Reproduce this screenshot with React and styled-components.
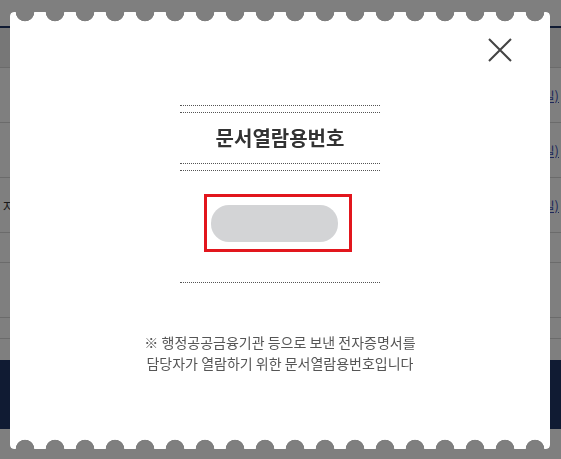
import styled, { createGlobalStyle } from "styled-components";

// -------------- GLOBAL --------------- //
const GlobalStyle = createGlobalStyle`
  html, body {
    margin: 0;
    padding: 0;
    background: #fff;
    font-family: "Noto Sans CJK KR", "Noto Sans", sans-serif;
  }
`;

// -------------- PAGE BEHIND --------------- //
const Page = styled.div`
  width: 561px;
  height: 459px;
  overflow: hidden;
  padding-top: 26px;
  box-sizing: border-box;
`;

const Table = styled.div`
  border-top: 2px solid #203666;
  display: flex;
  flex-direction: column;
`;

const Row = styled.div`
  height: ${(p) => p.$h}px;
  background: ${(p) => (p.$head ? "#eeeeee" : "#fff")};
  border-bottom: 1px solid #d6d6d6;
  box-sizing: border-box;
  display: flex;
  align-items: center;
  justify-content: space-between;
  font-size: 13px;
`;

const LeftCell = styled.span`
  padding-left: 3px;
  color: #333;
`;

const LinkCell = styled.span`
  padding-right: 2px;
  color: #3b4fb5;
  text-decoration: underline;
`;

const Footer = styled.div`
  margin-top: 21px;
  height: 69px;
  background: #203666;
`;

// -------------- MODAL --------------- //
const Overlay = styled.div`
  position: fixed;
  inset: 0;
  background: rgba(0, 0, 0, 0.5);
  padding: 12px 0 0 10px;
`;

//? scalloped top + bottom edge, circles every 30px
const scallop = `
  radial-gradient(circle at 15px 0, transparent 9px, #000 9.6px) top left / 30px 50% repeat-x,
  radial-gradient(circle at 15px 100%, transparent 9px, #000 9.6px) bottom left / 30px 50% repeat-x
`;

const Modal = styled.div`
  position: relative;
  width: 540px;
  height: 437px;
  background: #fff;
  border-radius: 4px;
  -webkit-mask: ${scallop};
  mask: ${scallop};
  display: flex;
  flex-direction: column;
  align-items: center;
  padding-top: 93px;
  box-sizing: border-box;
`;

const CloseButton = styled.button`
  position: absolute;
  top: 26px;
  right: 38px;
  width: 24px;
  height: 24px;
  padding: 0;
  border: 0;
  background: none;
  cursor: pointer;
`;

const DoubleRule = styled.div`
  width: 200px;
  height: 8px;
  box-sizing: border-box;
  border-top: 1px dotted #555;
  border-bottom: 1px dotted #555;
`;

const Rule = styled.div`
  width: 200px;
  border-top: 1px dotted #555;
  margin-top: 30px;
`;

const Title = styled.h2`
  margin: 0;
  height: 50px;
  line-height: 50px;
  font-size: 20px;
  font-weight: 700;
  color: #333;
`;

const NumberBox = styled.div`
  margin: 23px 4px 0 0;
  width: 148px;
  height: 58px;
  box-sizing: border-box;
  border: 3px solid #e2161d;
  padding: 8px 0 0 4px;
`;

const Redacted = styled.div`
  width: 127px;
  height: 37px;
  border-radius: 18px;
  background: #d3d4d6;
`;

const Note = styled.p`
  margin: 49px 0 0;
  text-align: center;
  font-size: 14px;
  line-height: 21px;
  color: #555;
`;

export default function App() {
  const rows = [
    { h: 55, left: "", link: "일)" },
    { h: 55, left: "", link: "일)" },
    { h: 55, left: "자", link: "일)" },
    { h: 30, left: "", link: "" },
    { h: 55, left: "", link: "" },
    { h: 21, left: "", link: "" },
  ];

  return (
    <>
      <GlobalStyle />
      <Page>
        <Table>
          <Row $h={40} $head />
          {rows.map((r, i) => (
            <Row key={i} $h={r.h}>
              <LeftCell>{r.left}</LeftCell>
              <LinkCell>{r.link}</LinkCell>
            </Row>
          ))}
        </Table>
        <Footer />
      </Page>

      <Overlay>
        <Modal>
          <CloseButton aria-label="닫기">
            <svg width="24" height="24" viewBox="0 0 24 24">
              <path d="M1 1 L23 23 M23 1 L1 23" stroke="#444" strokeWidth="2" />
            </svg>
          </CloseButton>
          <DoubleRule />
          <Title>문서열람용번호</Title>
          <DoubleRule />
          <NumberBox>
            <Redacted />
          </NumberBox>
          <Rule />
          <Note>
            ※ 행정공공금융기관 등으로 보낸 전자증명서를
            <br />
            담당자가 열람하기 위한 문서열람용번호입니다
          </Note>
        </Modal>
      </Overlay>
    </>
  );
}
